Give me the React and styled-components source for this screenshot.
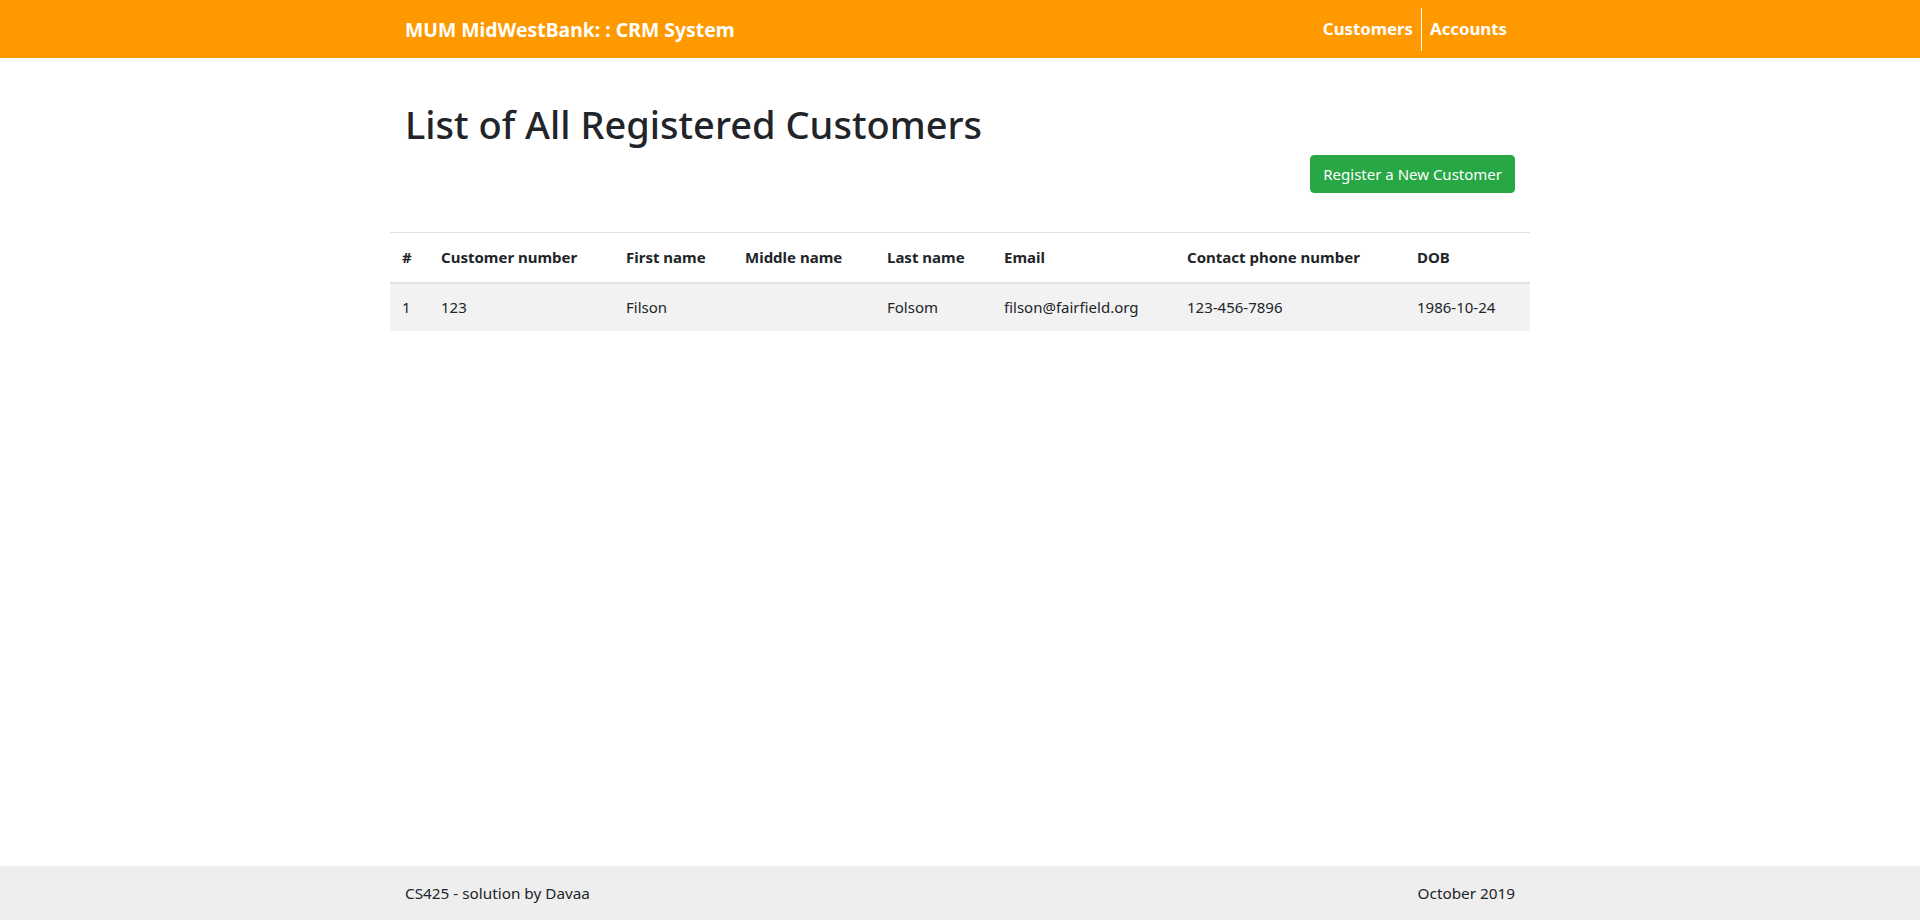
import React from "react";
import styled, { createGlobalStyle } from "styled-components";

const GlobalStyle = createGlobalStyle`
  html, body {
    margin: 0;
    padding: 0;
  }
  body {
    font-family: "Noto Sans", "Open Sans", sans-serif;
    font-size: 16px;
    color: #212529;
    background: #fff;
  }
  * {
    box-sizing: border-box;
  }
`;

const Page = styled.div`
  min-height: 100vh;
  display: flex;
  flex-direction: column;
`;

const Container = styled.div`
  width: 1140px;
  margin: 0 auto;
  padding: 0 15px;
`;

const NavBar = styled.nav`
  background-color: #ff9900;
  height: 58px;
`;

const NavInner = styled(Container)`
  height: 100%;
  display: flex;
  align-items: center;
  justify-content: space-between;
`;

const Brand = styled.a`
  color: #fff;
  font-weight: 700;
  font-size: 19.4px;
  text-decoration: none;
  margin-top: 1px;
`;

const NavLinks = styled.ul`
  display: flex;
  align-items: center;
  margin: 0;
  padding: 0;
  list-style: none;
  height: 100%;
`;

const NavItem = styled.li`
  display: flex;
  align-items: center;
  height: 43px;
  border-right: ${(p) => (p.divided ? "1px solid #fff" : "none")};
`;

const NavLink = styled.a`
  color: #fff;
  font-weight: 700;
  font-size: 16.8px;
  text-decoration: none;
  padding: 0 8px;
  margin-top: -1px;
`;

const Main = styled.main`
  flex: 1;
`;

const Title = styled.h1`
  margin: 42px 0 0;
  font-size: 38px;
  font-weight: 500;
  line-height: 48px;
`;

const Actions = styled.div`
  display: flex;
  justify-content: flex-end;
  margin-top: 7px;
`;

const Button = styled.button`
  background-color: #28a745;
  border: 1px solid #28a745;
  color: #fff;
  font-family: inherit;
  font-size: 15px;
  height: 38px;
  padding: 0 12px;
  border-radius: 4px;
  cursor: pointer;
`;

const TableWrap = styled.div`
  width: 1140px;
  margin: 39px auto 0;
`;

const Table = styled.table`
  width: 100%;
  border-collapse: collapse;
  table-layout: fixed;
  font-size: 15px;
`;

const Th = styled.th`
  width: ${(p) => p.w}px;
  text-align: left;
  font-weight: 700;
  padding: 0 12px;
  height: 50px;
  border-top: 1px solid #dee2e6;
  border-bottom: 2px solid #dee2e6;
`;

const Row = styled.tr`
  background-color: ${(p) => (p.striped ? "#f2f2f2" : "transparent")};
`;

const Td = styled.td`
  padding: 0 12px;
  height: 48px;
  border-top: 1px solid #dee2e6;
`;

const Footer = styled.footer`
  background-color: #eeeeee;
  height: 54px;
`;

const FooterInner = styled(Container)`
  height: 100%;
  display: flex;
  align-items: center;
  justify-content: space-between;
  font-size: 15.3px;
`;

const columns = [
  { label: "#", w: 39 },
  { label: "Customer number", w: 185 },
  { label: "First name", w: 119 },
  { label: "Middle name", w: 142 },
  { label: "Last name", w: 117 },
  { label: "Email", w: 183 },
  { label: "Contact phone number", w: 230 },
  { label: "DOB", w: 125 },
];

const customers = [
  {
    id: 1,
    number: "123",
    first: "Filson",
    middle: "",
    last: "Folsom",
    email: "filson@fairfield.org",
    phone: "123-456-7896",
    dob: "1986-10-24",
  },
];

export default function App() {
  return (
    <Page>
      <GlobalStyle />
      <NavBar>
        <NavInner>
          <Brand href="#">MUM MidWestBank: : CRM System</Brand>
          <NavLinks>
            <NavItem divided>
              <NavLink href="#">Customers</NavLink>
            </NavItem>
            <NavItem>
              <NavLink href="#">Accounts</NavLink>
            </NavItem>
          </NavLinks>
        </NavInner>
      </NavBar>

      <Main>
        <Container>
          <Title>List of All Registered Customers</Title>
          <Actions>
            <Button>Register a New Customer</Button>
          </Actions>
        </Container>
        <TableWrap>
          <Table>
            <thead>
              <tr>
                {columns.map((c) => (
                  <Th key={c.label} w={c.w}>
                    {c.label}
                  </Th>
                ))}
              </tr>
            </thead>
            <tbody>
              {customers.map((c, i) => (
                <Row key={c.id} striped={i % 2 === 0}>
                  <Td>{i + 1}</Td>
                  <Td>{c.number}</Td>
                  <Td>{c.first}</Td>
                  <Td>{c.middle}</Td>
                  <Td>{c.last}</Td>
                  <Td>{c.email}</Td>
                  <Td>{c.phone}</Td>
                  <Td>{c.dob}</Td>
                </Row>
              ))}
            </tbody>
          </Table>
        </TableWrap>
      </Main>

      <Footer>
        <FooterInner>
          <span>CS425 - solution by Davaa</span>
          <span>October 2019</span>
        </FooterInner>
      </Footer>
    </Page>
  );
}
